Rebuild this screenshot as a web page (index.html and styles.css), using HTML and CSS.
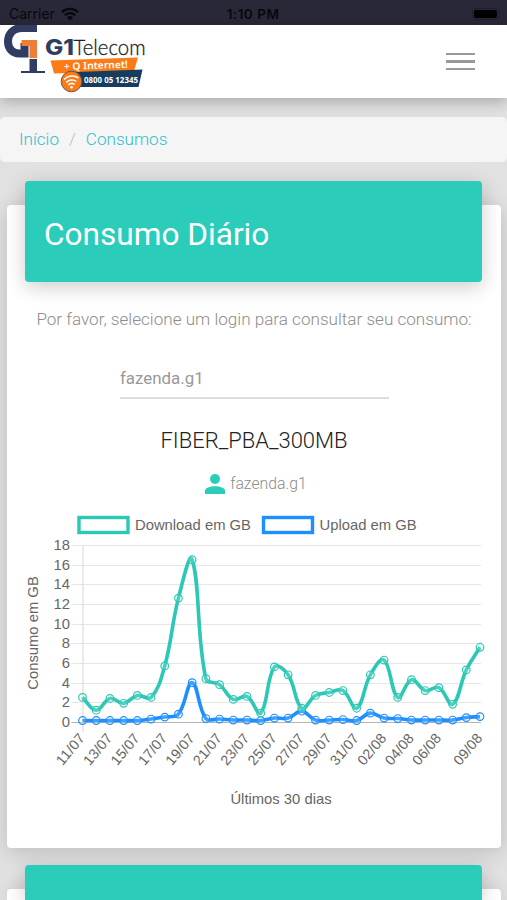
FILE: index.html
```
<!DOCTYPE html>
<html lang="pt-BR">

<head>
    <meta charset="UTF-8">
    <meta name="viewport" content="width=device-width, initial-scale=1.0">
    <title>G1Telecom - Consumos</title>
    <link rel="stylesheet" href="styles.css">
</head>

<body>
    <div class="status-bar">
        <div class="carrier">
            <span>Carrier</span>
            <svg width="18" height="14" viewBox="0 0 18 14">
                <path d="M1 5.2a11.5 11.5 0 0 1 16 0M3.8 8.2a7.4 7.4 0 0 1 10.4 0" fill="none" stroke="#07070d" stroke-width="2.3" />
                <path d="M9 13.5L6 10.5a4.3 4.3 0 0 1 6 0z" fill="#07070d" />
            </svg>
        </div>
        <div class="time">1:10 PM</div>
        <div class="battery"><div class="battery-level"></div></div>
    </div>

    <nav class="navbar">
        <svg class="logo" width="150" height="73" viewBox="0 0 150 73">
            <path d="M37 3H22C13 3 8 9 8 16.500S13 28.500 19 28.500H24.500V18" fill="none" stroke="#303c61" stroke-width="8" />
            <path d="M21.500 15H37V33H29.500V21H21.500z" fill="#f07d35" />
            <path d="M29.500 34H37V46H45V48H21V46H29.500z" fill="#303c61" />
            <path d="M50.500 35.500L138 32.500L134 46L54 48.500z" fill="#fb7c16" />
            <path d="M76 47L142.500 44.500L138.500 62H80z" fill="#163d60" />
            <circle cx="71.500" cy="56.500" r="10.300" fill="#fb7c16" stroke="#6d5148" />
            <path d="M64 54.500a11 11 0 0 1 14.500-1.500M66.200 57.500a8 8 0 0 1 10.300-1M68.300 60a5 5 0 0 1 6.400-.5" fill="none" stroke="#fff" stroke-width="1.500" />
            <circle cx="71.500" cy="62.300" r="1.300" fill="#fff" />
            <text class="logo-g1" x="45" y="30" textLength="29" lengthAdjust="spacingAndGlyphs">G1</text>
            <text class="logo-name" x="73.500" y="30" textLength="72" lengthAdjust="spacingAndGlyphs">Telecom</text>
            <text class="logo-slogan" x="64" y="45" textLength="64" lengthAdjust="spacingAndGlyphs" transform="rotate(-2 64 45)">+ Q Internet!</text>
            <text class="logo-phone" x="84" y="57.500" textLength="54" lengthAdjust="spacingAndGlyphs">0800 05 12345</text>
        </svg>
        <div class="menu-btn">
            <span></span>
            <span></span>
            <span></span>
        </div>
    </nav>

    <div class="breadcrumb">
        <a>Início</a>
        <span>/</span>
        <a>Consumos</a>
    </div>

    <div class="card">
        <div class="card-header">Consumo Diário</div>
        <p class="help">Por favor, selecione um login para consultar seu consumo:</p>
        <div class="select">fazenda.g1</div>
        <h4 class="plan">FIBER_PBA_300MB</h4>
        <div class="login">
            <svg width="20" height="20" viewBox="0 0 20 20" fill="#2bccba">
                <circle cx="10" cy="5" r="5" />
                <path d="M0 20V17C0 10.800 20 10.800 20 17V20z" />
            </svg>
            <span>fazenda.g1</span>
        </div>
        <svg class="chart" id="chart" width="494" height="320"></svg>
    </div>

    <div class="card card-next">
        <div class="card-header"></div>
    </div>

    <script src="chart.js"></script>
</body>

</html>
```
FILE: styles.css
```
* {
    box-sizing: border-box;
}

body {
    margin: 0;
    height: 900px;
    overflow: hidden;
    background-color: #e1e1e1;
    font-family: Roboto, "Liberation Sans", sans-serif;
    font-weight: 300;
    color: #3c4858;
}

.status-bar {
    height: 25px;
    padding: 2px 7px 0 9px;
    display: grid;
    grid-template-columns: 1fr auto 1fr;
    align-items: center;
    background-color: #282838;
    color: #07070d;
    font-family: Inter, sans-serif;
    font-size: 14px;
    font-weight: 400;
}

.carrier {
    display: flex;
    align-items: center;
    gap: 6px;
}

.time {
    margin-right: 3px;
    font-size: 13.5px;
    font-weight: 600;
    letter-spacing: 0.5px;
}

.battery {
    justify-self: end;
    width: 28px;
    height: 12px;
    padding: 1px;
    border: 1px solid #1f1f2c;
    border-radius: 4px;
}

.battery-level {
    width: 23px;
    height: 8px;
    border-radius: 2px;
    background-color: #000;
}

.navbar {
    height: 73px;
    padding-right: 32px;
    display: flex;
    align-items: center;
    justify-content: space-between;
    background-color: #fff;
    box-shadow: 0 4px 14px rgba(0, 0, 0, 0.25);
}

.logo-g1 {
    font: 800 21px Inter, sans-serif;
    fill: #303c61;
}

.logo-name {
    font: 300 22px Lato, sans-serif;
    fill: #222;
    stroke: #222;
    stroke-width: 0.3px;
}

.logo-slogan {
    font: 600 10px "Noto Sans", sans-serif;
    fill: #fff;
}

.logo-phone {
    font: 700 8px "Noto Sans", sans-serif;
    fill: #fff;
}

.menu-btn {
    display: flex;
    flex-direction: column;
    gap: 5px;
}

.menu-btn span {
    width: 29px;
    height: 2.4px;
    background-color: #999;
}

.breadcrumb {
    height: 45px;
    margin-top: 19px;
    padding: 0 19px 1px;
    display: flex;
    align-items: center;
    gap: 10px;
    border-radius: 5px;
    background-color: #f5f5f5;
    font-size: 17.1px;
    font-weight: 300;
    color: #bbb;
}

.breadcrumb a {
    color: #2fbfd0;
}

.card {
    height: 643px;
    margin: 43px 6px 0 7px;
    display: flex;
    flex-direction: column;
    align-items: center;
    border-radius: 4px;
    background-color: #fff;
    box-shadow: 0 4px 20px rgba(0, 0, 0, 0.16);
}

.card-header {
    flex-shrink: 0;
    align-self: stretch;
    height: 101px;
    margin: -24px 19px 0 18px;
    padding: 6px 19px 0;
    display: flex;
    align-items: center;
    border-radius: 4px;
    background-color: #2bccba;
    box-shadow: 0 5px 20px rgba(0, 0, 0, 0.2);
    color: #fff;
    font-size: 31.6px;
    font-weight: 400;
}

.card-next {
    height: 11px;
    margin-top: 41px;
    border-radius: 4px 4px 0 0;
}

.card-next .card-header {
    height: 35px;
    border-radius: 4px 4px 0 0;
}

.help {
    margin: 26px 0 0;
    font-size: 17.1px;
    line-height: 22px;
    color: #8c8c8c;
    white-space: nowrap;
}

.select {
    width: 269px;
    height: 42px;
    margin: 27px 0 0 1px;
    padding-top: 11px;
    border-bottom: 2px solid #ddd;
    font-size: 16.9px;
    font-weight: 400;
    line-height: 20px;
    color: #999;
}

.plan {
    margin: 28px 0 0;
    font-size: 22px;
    font-weight: 300;
    line-height: 28px;
    color: #222;
}

.login {
    height: 22px;
    margin: 18px 0 0 4px;
    display: flex;
    gap: 5px;
    font-size: 15.8px;
    line-height: 22px;
    color: #8c8c8c;
}

.login svg {
    margin-top: 1px;
}

.chart {
    margin-top: 10px;
    font: 14.8px "Liberation Sans", sans-serif;
    fill: #666;
}
```
FILE: chart.js
```
const svg = document.querySelector('#chart')

const labels = ['11/07', '', '13/07', '', '15/07', '', '17/07', '', '19/07', '',
    '21/07', '', '23/07', '', '25/07', '', '27/07', '', '29/07', '',
    '31/07', '', '02/08', '', '04/08', '', '06/08', '', '', '09/08']

const download = [2.5, 1.2, 2.4, 1.9, 2.7, 2.5, 5.7, 12.6, 16.5, 4.4, 3.8, 2.3, 2.6, 0.9, 5.6,
    4.8, 1.4, 2.7, 3.0, 3.2, 1.4, 4.8, 6.3, 2.5, 4.3, 3.2, 3.5, 1.8, 5.3, 7.6]
const upload = [0.15, 0.15, 0.15, 0.15, 0.15, 0.3, 0.5, 0.8, 4.0, 0.35, 0.3, 0.2, 0.2, 0.15, 0.4,
    0.4, 1.1, 0.2, 0.2, 0.25, 0.15, 0.9, 0.4, 0.35, 0.2, 0.2, 0.2, 0.2, 0.45, 0.55]

// plot area
const left = 75.5
const right = 473
const top_ = 40
const bottom = 217
const max = 18

const px = i => left + i * (right - left) / (labels.length - 1)
const py = v => bottom - v * (bottom - top_) / max

function add(name, attrs, text) {
    const el = document.createElementNS('http://www.w3.org/2000/svg', name)
    for (const key in attrs) el.setAttribute(key, attrs[key])
    if (text) el.textContent = text
    svg.appendChild(el)
}

function drawLegend(x, color, label) {
    add('rect', { x: x + 1.5, y: 12.5, width: 49, height: 15, fill: 'none', stroke: color, 'stroke-width': 3.4 })
    add('text', { x: x + 57.5, y: 25 }, label)
}

function drawAxes() {
    for (let v = 0; v <= max; v += 2) {
        const y = Math.round(py(v)) + 0.5
        add('path', { d: `M${left - 11} ${y}H${right + 1}`, stroke: v ? '#e6e6e6' : '#b4b4b4', 'stroke-width': 1.2 })
        add('text', { x: 63, y: y + 4.5, 'text-anchor': 'end' }, String(v))
    }
    add('path', { d: `M${left + 0.5} ${top_}V${bottom + 10}`, stroke: '#ddd', 'stroke-width': 1.2 })
    labels.forEach((label, i) => {
        if (!label) return
        const x = px(i)
        add('text', { x, y: 235, 'text-anchor': 'end', 'font-size': 14.2, textLength: 36, transform: `rotate(-50 ${x} 231)` }, label)
    })
    add('text', { x: 31, y: 128, 'text-anchor': 'middle', transform: 'rotate(-90 31 128)' }, 'Consumo em GB')
    add('text', { x: 274, y: 299, 'text-anchor': 'middle' }, 'Últimos 30 dias')
}

function drawLine(data, color) {
    const pts = data.map((v, i) => ({ x: px(i), y: py(v) }))
    const clamp = y => Math.min(bottom, Math.max(top_, y))

    // control points of the spline, tension 0.4
    pts.forEach((p, i) => {
        const prev = pts[i - 1] || p
        const next = pts[i + 1] || p
        const d1 = Math.hypot(p.x - prev.x, p.y - prev.y)
        const d2 = Math.hypot(next.x - p.x, next.y - p.y)
        const a = 0.4 * d1 / (d1 + d2)
        const b = 0.4 * d2 / (d1 + d2)
        p.inX = p.x - a * (next.x - prev.x)
        p.inY = clamp(p.y - a * (next.y - prev.y))
        p.outX = p.x + b * (next.x - prev.x)
        p.outY = clamp(p.y + b * (next.y - prev.y))
    })

    let d = `M${pts[0].x} ${pts[0].y}`
    for (let i = 1; i < pts.length; i++) {
        const p = pts[i - 1]
        const q = pts[i]
        d += `C${p.outX} ${p.outY} ${q.inX} ${q.inY} ${q.x} ${q.y}`
    }
    add('path', { d, fill: 'none', stroke: color, 'stroke-width': 3.6 })
    pts.forEach(p => {
        add('circle', { cx: p.x, cy: p.y, r: 3.8, fill: 'rgba(255, 255, 255, 0.15)', stroke: color, 'stroke-width': 1.2 })
    })
}

drawLegend(70.5, '#2bc8b5', 'Download em GB')
drawLegend(255, '#1e8fff', 'Upload em GB')
drawAxes()
drawLine(upload, '#1e8fff')
drawLine(download, '#2bc8b5')
```
